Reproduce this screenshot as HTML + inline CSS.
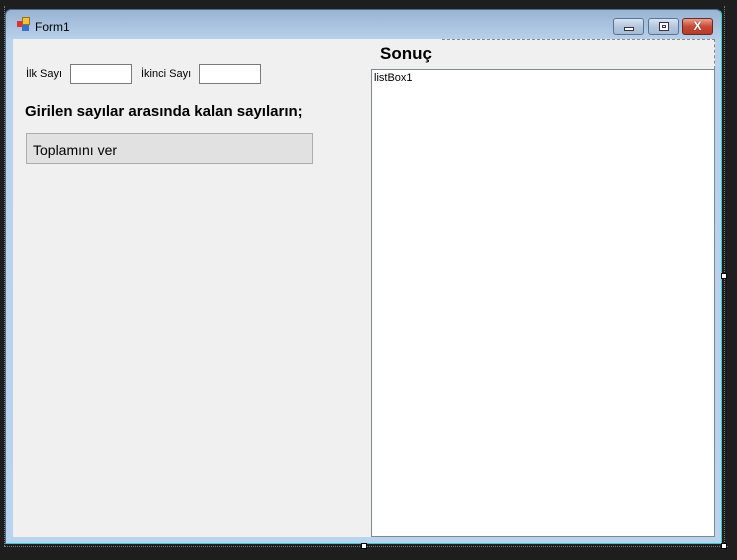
<!DOCTYPE html>
<html><head><meta charset="utf-8"><style>
*{margin:0;padding:0;box-sizing:border-box}
body{width:737px;height:560px;background:#1e1e1e;position:relative;overflow:hidden;font-family:"Liberation Sans",sans-serif}
.a{position:absolute}
.win{left:5px;top:9px;width:717px;height:535px;border-radius:6px 6px 0 0;background:linear-gradient(#98b4d3 0,#b9d1ea 30px,#bad3ee 100%);border:1px solid #4a6a90;border-bottom-color:#3cc;border-right-color:#3cc}
.client{left:13px;top:39px;width:702px;height:498px;background:#f0f0f0}
.btn{top:18px;height:17px;border:1px solid #5a7394;border-radius:3px;background:linear-gradient(#d8e4f1,#b3c7de 50%,#a5bcd7)}
.lbl{font-size:11px;color:#000}
.tb{background:#fff;border:1px solid #7a7a7a;height:20px;width:62px;top:64px}
</style></head><body>
<div class="a" style="left:4px;top:6px;width:1px;height:540px;border-left:1px dotted #777"></div>
<div class="a" style="left:4px;top:546px;width:724px;border-top:1px dotted #777"></div>
<div class="a" style="left:724px;top:6px;height:540px;border-left:1px dotted #777"></div>
<div class="a win"></div>
<div class="a" style="left:17px;top:21px;width:6px;height:6px;background:#d33"></div>
<div class="a" style="left:22px;top:17px;width:8px;height:8px;background:#f2c23a;border:1px solid #a07010"></div>
<div class="a" style="left:22px;top:25px;width:7px;height:6px;background:#3a70d0"></div>
<div class="a lbl" style="left:35px;top:20px;font-size:12px">Form1</div>
<div class="a btn" style="left:613px;width:31px"><div class="a" style="left:10px;top:8px;width:10px;height:4px;background:#fff;border:1px solid #334"></div></div>
<div class="a btn" style="left:648px;width:31px"><div class="a" style="left:10px;top:3px;width:10px;height:9px;background:#fff;border:1px solid #334"><div class="a" style="left:2px;top:2px;width:4px;height:3px;border:1px solid #334"></div></div></div>
<div class="a btn" style="left:682px;width:31px;background:linear-gradient(#e8a090,#c84a36 50%,#b83a28);border-color:#6a2a20"><div class="a" style="left:0;top:0;width:29px;text-align:center;color:#fff;font-weight:bold;font-size:12px;line-height:15px;text-shadow:0 0 1px #333">X</div></div>
<div class="a client"></div>
<div class="a" style="left:442px;top:39px;width:273px;height:30px;border-top:1px dashed #888;border-right:1px dashed #888"></div>
<div class="a lbl" style="left:26px;top:68px">İlk Sayı</div>
<div class="a tb" style="left:70px"></div>
<div class="a lbl" style="left:141px;top:68px">İkinci Sayı</div>
<div class="a tb" style="left:199px"></div>
<div class="a" style="left:25px;top:103px;font-size:15px;font-weight:bold">Girilen sayılar arasında kalan sayıların;</div>
<div class="a" style="left:26px;top:133px;width:287px;height:31px;background:#e1e1e1;border:1px solid #adadad;font-size:14px;padding:8px 0 0 6px">Toplamını ver</div>
<div class="a" style="left:380px;top:44px;font-size:17px;font-weight:bold">Sonuç</div>
<div class="a" style="left:371px;top:69px;width:344px;height:468px;background:#fff;border:1px solid #828790"><div style="font-size:11px;padding:2px 0 0 2px">listBox1</div></div>
<div class="a" style="left:361px;top:543px;width:6px;height:6px;background:#fff;border:1px solid #000"></div>
<div class="a" style="left:721px;top:543px;width:6px;height:6px;background:#fff;border:1px solid #000"></div>
<div class="a" style="left:721px;top:273px;width:6px;height:6px;background:#fff;border:1px solid #000"></div>
</body></html>
